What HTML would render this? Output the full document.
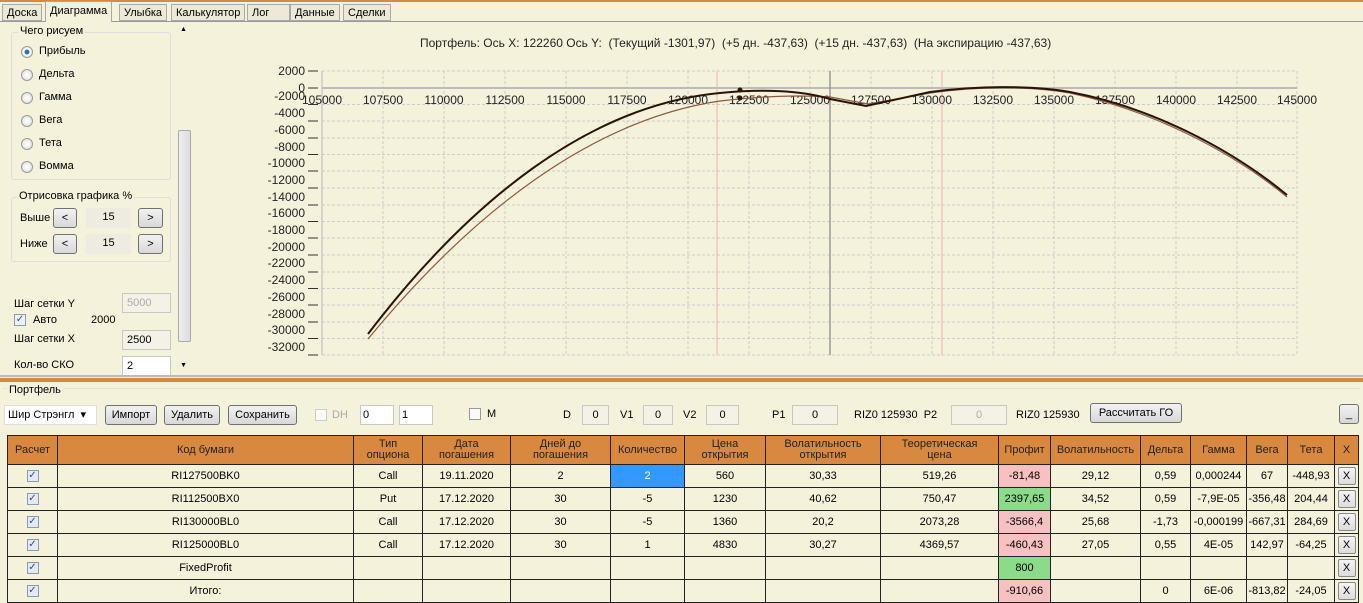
<!DOCTYPE html>
<html><head><meta charset="utf-8"><style>
*{box-sizing:border-box;margin:0;padding:0}
body{width:1363px;height:602px;overflow:hidden;background:#F5F2DC;font-family:"Liberation Sans",sans-serif;font-size:11px;color:#000;position:relative}
.a{position:absolute}
.tab{position:absolute;top:4px;height:17px;border:1px solid #a9a9a9;background:#ece9d8;font-size:11px;padding:2px 4px 0;white-space:nowrap}
.btn{position:absolute;height:20px;border:1px solid #707070;border-radius:3px;background:linear-gradient(#f2f2f2,#d8d8d8);font-size:11px;text-align:center;line-height:18px}
.inp{position:absolute;height:20px;border:1px solid #c8c8c0;background:#f4f2e6;font-size:11px;text-align:center;line-height:18px}
.rad{position:absolute;width:12px;height:12px;border-radius:50%;border:1px solid #999;background:radial-gradient(#fff,#ddd)}
.cb{position:absolute;width:12px;height:12px;border:1px solid #8a9ab0;background:#eef2f8;font-size:10px;line-height:10px;text-align:center;color:#2a4a9a}
.c{display:inline-block;width:12px;height:12px;border:1px solid #8a9ab0;background:#e4eaf4;font-size:10px;line-height:10px;color:#2a4a9a;vertical-align:middle}
table{position:absolute;left:7px;top:435px;border-collapse:collapse;font-size:11px}
td,th{border:1px solid #222;text-align:center;height:23px;padding:0;font-weight:normal;background:#F5F2DC}
th{background:#D9893F;height:29px;line-height:11px;color:#222}
.r{background:#F7C1C1}.g{background:#8BDB8B}.sel{background:#3399ff;color:#fff}
.x{display:inline-block;width:18px;height:18px;border:1px solid #888;border-radius:2px;background:linear-gradient(#f4f4f4,#dcdcdc);line-height:16px}
</style></head><body>
<div class="a" style="left:0;top:0;width:1363px;height:2px;background:#D9893F"></div>
<div class="a" style="left:0;top:21px;width:1363px;height:1px;background:#999"></div>
<div class="tab" style="left:2px">Доска</div>
<div class="tab" style="left:45px;top:1px;height:21px;background:#F5F2DC;border-bottom:none;padding-top:3px">Диаграмма</div>
<div class="tab" style="left:119px">Улыбка</div>
<div class="tab" style="left:171px">Калькулятор</div>
<div class="tab" style="left:247px;width:43px">Лог</div>
<div class="tab" style="left:290px">Данные</div>
<div class="tab" style="left:343px">Сделки</div>

<div class="a" style="left:11px;top:32px;width:160px;height:148px;border:1px solid #ddd;border-radius:3px"></div>
<div class="a" style="left:18px;top:25px;background:#F5F2DC;padding:0 2px">Чего рисуем</div>
<div class="rad" style="left:21px;top:46px;background:radial-gradient(#2a6fc0 30%,#fff 40%,#ddd)"></div><div class="a" style="left:39px;top:45px">Прибыль</div>
<div class="rad" style="left:21px;top:69px"></div><div class="a" style="left:39px;top:68px">Дельта</div>
<div class="rad" style="left:21px;top:92px"></div><div class="a" style="left:39px;top:91px">Гамма</div>
<div class="rad" style="left:21px;top:115px"></div><div class="a" style="left:39px;top:114px">Вега</div>
<div class="rad" style="left:21px;top:138px"></div><div class="a" style="left:39px;top:137px">Тета</div>
<div class="rad" style="left:21px;top:161px"></div><div class="a" style="left:39px;top:160px">Вомма</div>
<div class="a" style="left:11px;top:197px;width:160px;height:65px;border:1px solid #ddd;border-radius:3px"></div>
<div class="a" style="left:17px;top:190px;background:#F5F2DC;padding:0 2px">Отрисовка графика %</div>
<div class="a" style="left:20px;top:212px">Выше</div><div class="btn" style="left:53px;top:208px;width:24px">&lt;</div><div class="inp" style="left:86px;top:208px;width:45px;border:none;background:#eeece0">15</div><div class="btn" style="left:138px;top:208px;width:25px">&gt;</div>
<div class="a" style="left:20px;top:238px">Ниже</div><div class="btn" style="left:53px;top:234px;width:24px">&lt;</div><div class="inp" style="left:86px;top:234px;width:45px;border:none;background:#eeece0">15</div><div class="btn" style="left:138px;top:234px;width:25px">&gt;</div>
<div class="a" style="left:14px;top:298px">Шаг сетки Y</div><div class="inp" style="left:122px;top:293px;width:49px;color:#aaa;text-align:left;padding-left:4px">5000</div>
<div class="cb" style="left:14px;top:314px">✓</div><div class="a" style="left:33px;top:314px">Авто</div><div class="a" style="left:91px;top:314px">2000</div>
<div class="a" style="left:14px;top:333px">Шаг сетки X</div><div class="inp" style="left:122px;top:330px;width:49px;text-align:left;padding-left:4px">2500</div>
<div class="a" style="left:14px;top:359px">Кол-во СКО</div><div class="inp" style="left:122px;top:356px;width:49px;background:#fff;text-align:left;padding-left:4px">2</div>
<div class="a" style="left:176px;top:22px;width:17px;height:352px;background:#F5F2DC"></div>
<div class="a" style="left:178px;top:130px;width:13px;height:212px;border:1px solid #aaa;border-radius:2px;background:linear-gradient(90deg,#eee,#ddd)"></div>
<div class="a" style="left:180px;top:26px;font-size:7px">▲</div><div class="a" style="left:180px;top:362px;font-size:7px">▼</div>

<div class="a" style="left:420px;top:36px;font-size:12px;color:#222;white-space:nowrap">Портфель: Ось X: 122260 Ось Y:&nbsp; (Текущий -1301,97)&nbsp; (+5 дн. -437,63)&nbsp; (+15 дн. -437,63)&nbsp; (На экспирацию -437,63)</div>
<svg class="a" style="left:0;top:0" width="1363" height="380" font-family="Liberation Sans" font-size="12">
<g stroke="#ccc" stroke-dasharray="3,2" stroke-width="1">
<line x1="322" y1="71" x2="1297" y2="71"/><line x1="322" y1="104.5" x2="1297" y2="104.5"/><line x1="322" y1="121" x2="1297" y2="121"/><line x1="322" y1="138" x2="1297" y2="138"/><line x1="322" y1="154.5" x2="1297" y2="154.5"/><line x1="322" y1="171" x2="1297" y2="171"/><line x1="322" y1="188" x2="1297" y2="188"/><line x1="322" y1="205" x2="1297" y2="205"/><line x1="322" y1="221.5" x2="1297" y2="221.5"/><line x1="322" y1="238" x2="1297" y2="238"/><line x1="322" y1="255" x2="1297" y2="255"/><line x1="322" y1="272" x2="1297" y2="272"/><line x1="322" y1="288.5" x2="1297" y2="288.5"/><line x1="322" y1="305" x2="1297" y2="305"/><line x1="322" y1="322" x2="1297" y2="322"/><line x1="322" y1="338.5" x2="1297" y2="338.5"/><line x1="322" y1="355" x2="1297" y2="355"/>
<line x1="383" y1="71" x2="383" y2="355"/><line x1="444" y1="71" x2="444" y2="355"/><line x1="505" y1="71" x2="505" y2="355"/><line x1="566" y1="71" x2="566" y2="355"/><line x1="627" y1="71" x2="627" y2="355"/><line x1="688" y1="71" x2="688" y2="355"/><line x1="749" y1="71" x2="749" y2="355"/><line x1="810" y1="71" x2="810" y2="355"/><line x1="871" y1="71" x2="871" y2="355"/><line x1="932" y1="71" x2="932" y2="355"/><line x1="993" y1="71" x2="993" y2="355"/><line x1="1054" y1="71" x2="1054" y2="355"/><line x1="1115" y1="71" x2="1115" y2="355"/><line x1="1176" y1="71" x2="1176" y2="355"/><line x1="1237" y1="71" x2="1237" y2="355"/><line x1="1297" y1="71" x2="1297" y2="355"/>
</g>
<line x1="322" y1="88" x2="1297" y2="88" stroke="#bbb" stroke-width="2"/>
<line x1="322" y1="71" x2="322" y2="355" stroke="#bbb"/>
<line x1="717" y1="71" x2="717" y2="355" stroke="#f0b0b0"/><line x1="942" y1="71" x2="942" y2="355" stroke="#f0b0b0"/>
<line x1="830" y1="71" x2="830" y2="355" stroke="#999" stroke-width="1.5"/>
<g fill="#222" text-anchor="end">
<text x="305" y="75">2000</text><text x="305" y="92">0</text><text x="305" y="100">-2000</text><text x="305" y="117">-4000</text><text x="305" y="134">-6000</text><text x="305" y="151">-8000</text><text x="305" y="167">-10000</text><text x="305" y="184">-12000</text><text x="305" y="201">-14000</text><text x="305" y="217">-16000</text><text x="305" y="234">-18000</text><text x="305" y="251">-20000</text><text x="305" y="267">-22000</text><text x="305" y="284">-24000</text><text x="305" y="301">-26000</text><text x="305" y="318">-28000</text><text x="305" y="334">-30000</text><text x="305" y="351">-32000</text>
</g>
<g stroke="#333"><line x1="308" y1="71" x2="318" y2="71"/><line x1="308" y1="88" x2="318" y2="88"/><line x1="308" y1="104.5" x2="318" y2="104.5"/><line x1="308" y1="121" x2="318" y2="121"/><line x1="308" y1="138" x2="318" y2="138"/><line x1="308" y1="154.5" x2="318" y2="154.5"/><line x1="308" y1="171" x2="318" y2="171"/><line x1="308" y1="188" x2="318" y2="188"/><line x1="308" y1="205" x2="318" y2="205"/><line x1="308" y1="221.5" x2="318" y2="221.5"/><line x1="308" y1="238" x2="318" y2="238"/><line x1="308" y1="255" x2="318" y2="255"/><line x1="308" y1="272" x2="318" y2="272"/><line x1="308" y1="288.5" x2="318" y2="288.5"/><line x1="308" y1="305" x2="318" y2="305"/><line x1="308" y1="322" x2="318" y2="322"/><line x1="308" y1="338.5" x2="318" y2="338.5"/><line x1="308" y1="355" x2="318" y2="355"/></g>
<g fill="#222" text-anchor="middle">
<text x="322" y="104">105000</text><text x="383" y="104">107500</text><text x="444" y="104">110000</text><text x="505" y="104">112500</text><text x="566" y="104">115000</text><text x="627" y="104">117500</text><text x="688" y="104">120000</text><text x="749" y="104">122500</text><text x="810" y="104">125000</text><text x="871" y="104">127500</text><text x="932" y="104">130000</text><text x="993" y="104">132500</text><text x="1054" y="104">135000</text><text x="1115" y="104">137500</text><text x="1176" y="104">140000</text><text x="1237" y="104">142500</text><text x="1297" y="104">145000</text>
</g>
<path d="M368,339 C470,215 590,120 720,101 C760,96 800,95 830,97 L868,104 L930,93 C980,86 1030,86 1070,93 C1150,110 1230,150 1287,197" fill="none" stroke="#8a5a40" stroke-width="1.2"/>
<path d="M368,334 C470,200 590,105 720,93 C760,89 800,90 830,99 L866,106 L930,92 C975,86 1030,85 1070,92 C1150,107 1230,148 1287,195" fill="none" stroke="#2a1408" stroke-width="2"/>
<circle cx="740" cy="90" r="2.5" fill="#2a1408"/><circle cx="740" cy="98" r="2.5" fill="#2a1408"/>
</svg>

<div class="a" style="left:0;top:375px;width:1363px;height:2px;background:#bbb"></div>
<div class="a" style="left:0;top:378px;width:1363px;height:4px;background:#D9893F"></div>
<div class="a" style="left:3px;top:388px;width:1357px;height:1px;background:#e6e3cf"></div>
<div class="a" style="left:7px;top:384px;background:#F5F2DC;padding:0 2px">Портфель</div>
<div class="inp" style="left:4px;top:405px;width:93px;background:#fff;text-align:left;padding-left:3px;border-color:#ddd">Шир Стрэнгл &nbsp;▾</div>
<div class="btn" style="left:105px;top:405px;width:52px">Импорт</div>
<div class="btn" style="left:164px;top:405px;width:56px">Удалить</div>
<div class="btn" style="left:228px;top:405px;width:69px">Сохранить</div>
<div class="cb" style="left:315px;top:409px;border-color:#ccc;background:#fafafa"></div><div class="a" style="left:332px;top:409px;color:#aaa">DH</div>
<div class="inp" style="left:360px;top:405px;width:34px;background:#fff;text-align:left;padding-left:2px">0</div>
<div class="inp" style="left:399px;top:405px;width:34px;background:#fff;text-align:left;padding-left:2px">1</div>
<div class="cb" style="left:469px;top:408px;border-color:#999;background:#fafafa"></div><div class="a" style="left:487px;top:408px">M</div>
<div class="a" style="left:563px;top:409px">D</div><div class="inp" style="left:582px;top:405px;width:27px">0</div>
<div class="a" style="left:620px;top:409px">V1</div><div class="inp" style="left:643px;top:405px;width:30px">0</div>
<div class="a" style="left:683px;top:409px">V2</div><div class="inp" style="left:706px;top:405px;width:33px">0</div>
<div class="a" style="left:772px;top:409px">P1</div><div class="inp" style="left:792px;top:405px;width:46px">0</div>
<div class="a" style="left:854px;top:409px">RIZ0 125930&nbsp; P2</div><div class="inp" style="left:951px;top:405px;width:56px;color:#aaa">0</div>
<div class="a" style="left:1016px;top:409px">RIZ0 125930</div>
<div class="btn" style="left:1090px;top:403px;width:92px">Рассчитать ГО</div>
<div class="btn" style="left:1339px;top:404px;width:20px">_</div>

<table>
<tr><th style="width:50px">Расчет</th><th style="width:296px">Код бумаги</th><th style="width:69px">Тип<br>опциона</th><th style="width:88px">Дата<br>погашения</th><th style="width:100px">Дней до<br>погашения</th><th style="width:74px">Количество</th><th style="width:81px">Цена<br>открытия</th><th style="width:115px">Волатильность<br>открытия</th><th style="width:118px">Теоретическая<br>цена</th><th style="width:52px">Профит</th><th style="width:90px">Волатильность</th><th style="width:50px">Дельта</th><th style="width:56px">Гамма</th><th style="width:41px">Вега</th><th style="width:47px">Тета</th><th style="width:24px">X</th></tr>
<tr><td><span class="c">✓</span></td><td>RI127500BK0</td><td>Call</td><td>19.11.2020</td><td>2</td><td class="sel">2</td><td>560</td><td>30,33</td><td>519,26</td><td class="r">-81,48</td><td>29,12</td><td>0,59</td><td>0,000244</td><td>67</td><td>-448,93</td><td><span class="x">X</span></td></tr>
<tr><td><span class="c">✓</span></td><td>RI112500BX0</td><td>Put</td><td>17.12.2020</td><td>30</td><td>-5</td><td>1230</td><td>40,62</td><td>750,47</td><td class="g">2397,65</td><td>34,52</td><td>0,59</td><td>-7,9E-05</td><td>-356,48</td><td>204,44</td><td><span class="x">X</span></td></tr>
<tr><td><span class="c">✓</span></td><td>RI130000BL0</td><td>Call</td><td>17.12.2020</td><td>30</td><td>-5</td><td>1360</td><td>20,2</td><td>2073,28</td><td class="r">-3566,4</td><td>25,68</td><td>-1,73</td><td>-0,000199</td><td>-667,31</td><td>284,69</td><td><span class="x">X</span></td></tr>
<tr><td><span class="c">✓</span></td><td>RI125000BL0</td><td>Call</td><td>17.12.2020</td><td>30</td><td>1</td><td>4830</td><td>30,27</td><td>4369,57</td><td class="r">-460,43</td><td>27,05</td><td>0,55</td><td>4E-05</td><td>142,97</td><td>-64,25</td><td><span class="x">X</span></td></tr>
<tr><td><span class="c">✓</span></td><td>FixedProfit</td><td></td><td></td><td></td><td></td><td></td><td></td><td></td><td class="g">800</td><td></td><td></td><td></td><td></td><td></td><td><span class="x">X</span></td></tr>
<tr><td><span class="c">✓</span></td><td>Итого:</td><td></td><td></td><td></td><td></td><td></td><td></td><td></td><td class="r">-910,66</td><td></td><td>0</td><td>6E-06</td><td>-813,82</td><td>-24,05</td><td><span class="x">X</span></td></tr>
</table>
</body></html>
